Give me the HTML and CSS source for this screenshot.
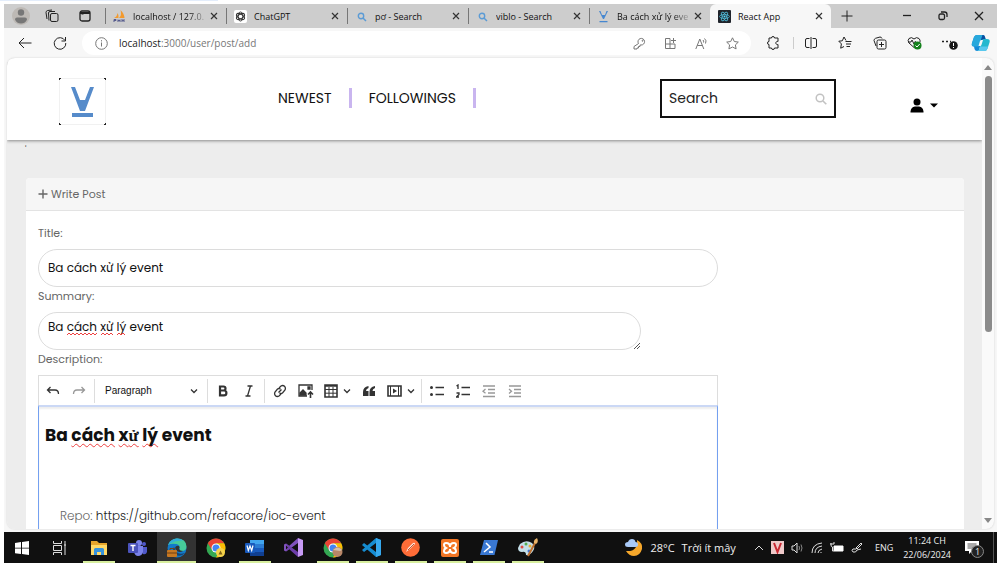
FILE: index.html
```html
<!DOCTYPE html>
<html lang="vi">
<head>
<meta charset="utf-8">
<meta name="viewport" content="width=device-width, initial-scale=1">
<title>React App</title>
<link rel="stylesheet" href="styles.css">
</head>
<body>
<div class="desktop">
  <div class="top-strip"></div>
  <div class="browser">
    <div class="tabbar">
      <div class="tab-tools">
        <button class="icon-btn" aria-label="Profile"><svg width="20" height="20" viewBox="0 0 20 20"><circle cx="10" cy="10" r="9" fill="#bdb9b5"/><circle cx="10" cy="6.500" r="3.200" fill="#777"/><path d="M4 13.500q0-2 2-2h8q2 0 2 2q-1.500 4-6 4t-6-4z" fill="#777"/></svg></button>
        <button class="icon-btn" aria-label="Workspaces"><svg width="14" height="14" viewBox="0 0 14 14" class="line"><rect x="5.500" y="4.500" width="7.500" height="8" rx="1.500"/><path d="M4 11.500L3.500 4q0-1.500 1.500-1.500h5M2 10L1 3.500Q1 2 2.500 1.500L7 1"/></svg></button>
        <button class="icon-btn" aria-label="Tab actions"><svg width="12" height="12" viewBox="0 0 12 12" class="line bold"><rect x="1" y="1" width="10" height="10" rx="2"/><path d="M1 3h10M3.500 3v1.500" stroke-width="2"/></svg></button>
      </div>
      <div class="tabs">
        <div class="tab"><svg class="fav" viewBox="0 0 13 13"><path d="M1 8Q4 7 4.500 3Q6 5 5.500 8zM6 8Q9 5 7.500 0Q11 3 11.500 8z" fill="#f39a2d"/><path d="M1 12V9.500h2v1H1M5 12V9.500M5 10.500h2M7 9.500V12M9 12V9.500l1 1.500 1-1.500V12" fill="none" stroke="#555a8c"/></svg><span class="tab-title fade">localhost / 127.0.</span><button class="close" aria-label="Close tab"><svg width="8" height="8" viewBox="0 0 8 8"><path d="M1 1l6 6M7 1L1 7"/></svg></button></div>
        <div class="tab"><svg class="fav" viewBox="0 0 13 13"><rect width="13" height="13" rx="2" fill="#fff"/><g fill="none" stroke="#333"><ellipse cx="6.500" cy="6.500" rx="2.200" ry="4.500"/><ellipse cx="6.500" cy="6.500" rx="2.200" ry="4.500" transform="rotate(60 6.500 6.500)"/><ellipse cx="6.500" cy="6.500" rx="2.200" ry="4.500" transform="rotate(120 6.500 6.500)"/></g></svg><span class="tab-title">ChatGPT</span><button class="close" aria-label="Close tab"><svg width="8" height="8" viewBox="0 0 8 8"><path d="M1 1l6 6M7 1L1 7"/></svg></button></div>
        <div class="tab"><svg class="fav" viewBox="0 0 13 13"><circle cx="6" cy="6" r="2.700" fill="none" stroke="#5b9bd5" stroke-width="1.400"/><path d="M8 8l3 3" stroke="#5b9bd5" stroke-width="1.500"/></svg><span class="tab-title">pơ - Search</span><button class="close" aria-label="Close tab"><svg width="8" height="8" viewBox="0 0 8 8"><path d="M1 1l6 6M7 1L1 7"/></svg></button></div>
        <div class="tab"><svg class="fav" viewBox="0 0 13 13"><circle cx="6" cy="6" r="2.700" fill="none" stroke="#5b9bd5" stroke-width="1.400"/><path d="M8 8l3 3" stroke="#5b9bd5" stroke-width="1.500"/></svg><span class="tab-title">viblo - Search</span><button class="close" aria-label="Close tab"><svg width="8" height="8" viewBox="0 0 8 8"><path d="M1 1l6 6M7 1L1 7"/></svg></button></div>
        <div class="tab"><svg class="fav" viewBox="0 0 13 13"><path d="M2 1h1.500L5 5h3l1.500-4H11L7 9H6zM2.500 11h8v1.300h-8z" fill="#4687d0"/></svg><span class="tab-title fade">Ba cách xử lý eve</span><button class="close" aria-label="Close tab"><svg width="8" height="8" viewBox="0 0 8 8"><path d="M1 1l6 6M7 1L1 7"/></svg></button></div>
        <div class="tab active"><svg class="fav" viewBox="0 0 13 13"><rect width="13" height="13" rx="1" fill="#20242b"/><g fill="none" stroke="#4fb9d8" stroke-width=".8"><ellipse cx="6.500" cy="6.500" rx="5" ry="2"/><ellipse cx="6.500" cy="6.500" rx="5" ry="2" transform="rotate(60 6.500 6.500)"/><ellipse cx="6.500" cy="6.500" rx="5" ry="2" transform="rotate(120 6.500 6.500)"/></g><circle cx="6.500" cy="6.500" r="1" fill="#61dafb"/></svg><span class="tab-title">React App</span><button class="close" aria-label="Close tab"><svg width="8" height="8" viewBox="0 0 8 8"><path d="M1 1l6 6M7 1L1 7"/></svg></button></div>
        <button class="icon-btn new-tab" aria-label="New tab"><svg width="12" height="12" viewBox="0 0 12 12" class="line"><path d="M6 .5v11M.5 6h11"/></svg></button>
      </div>
      <div class="win-controls">
        <button class="icon-btn" aria-label="Minimize"><svg width="10" height="10" viewBox="0 0 10 10" class="line bold"><path d="M1 4.500h8"/></svg></button>
        <button class="icon-btn" aria-label="Restore"><svg width="10" height="10" viewBox="0 0 10 10" class="line bold"><rect x="1" y="3" width="5.500" height="5.500" rx="1.500"/><path d="M3 1h3.500Q9 1 9 3.500V6"/></svg></button>
        <button class="icon-btn" aria-label="Close window"><svg width="10" height="10" viewBox="0 0 10 10" class="line bold"><path d="M1 1l8 8M9 1L1 9"/></svg></button>
      </div>
    </div>

    <div class="toolbar">
      <button class="icon-btn nav-btn" aria-label="Back"><svg width="14" height="12" viewBox="0 0 14 12" class="line"><path d="M13.500 6H1M6 1L1 6l5 5"/></svg></button>
      <button class="icon-btn nav-btn" aria-label="Refresh"><svg width="14" height="14" viewBox="0 0 14 14" class="line"><path d="M12 4.500A5.800 5.800 0 1 0 12.800 7M12.500 1v4h-4"/></svg></button>
      <div class="address">
        <svg width="13" height="13" viewBox="0 0 13 13" class="line gray"><circle cx="6.500" cy="6.500" r="5.800"/><path d="M6.500 5.500v4M6.500 3.200v1.200"/></svg>
        <a class="url" href="#">localhost<span>:3000/user/post/add</span></a>
        <div class="address-actions">
          <button class="icon-btn" aria-label="Passwords"><svg width="13" height="13" viewBox="0 0 13 13" class="line gray"><path d="M5.500 6.500A3.300 3.300 0 1 1 8 8H7v1.500H5.500V11H4v1H1v-2.500z"/><circle cx="9.500" cy="3.800" r=".5"/></svg></button>
          <button class="icon-btn" aria-label="Install app"><svg width="13" height="13" viewBox="0 0 13 13" class="line gray"><path d="M6 1.500H1.500v10h9.500V7H1.500M6 1.500v10M9.500 1v5M7 3.500h5"/></svg></button>
          <button class="icon-btn" aria-label="Read aloud"><svg width="13" height="13" viewBox="0 0 13 13" class="line gray"><path d="M.8 12L4.800 2l4 10M2.300 8.500h5M8 3q1 1 .5 2.500M9.500 1.500q2.500 2 1 5"/></svg></button>
          <button class="icon-btn" aria-label="Add to favorites"><svg width="13" height="13" viewBox="0 0 13 13" class="line gray"><path d="M6.500.8l1.800 3.700 4 .6-2.900 2.800.7 4-3.600-1.900-3.600 1.900.7-4L.7 5.100l4-.6z"/></svg></button>
        </div>
      </div>
      <div class="browser-actions">
        <button class="icon-btn" aria-label="Extensions"><svg width="14" height="14" viewBox="0 0 14 14" class="line"><path d="M4 2h1.500a1.500 1.500 0 0 1 3 0H12v3.500a1.600 1.600 0 1 0 0 3V12H8.500a1.500 1.500 0 0 1-3 0H3V8.500a1.500 1.500 0 0 1 0-3V2z"/></svg></button>
        <span class="vbar"></span>
        <button class="icon-btn" aria-label="Split screen"><svg width="14" height="14" viewBox="0 0 14 14" class="line"><path d="M5.500 2.500H3Q1.500 2.500 1.500 4v6q0 1.500 1.500 1.500h2.500M8.500 2.500H11q1.500 0 1.500 1.500v6q0 1.500-1.500 1.500H8.500M7 1v12"/></svg></button>
        <button class="icon-btn" aria-label="Favorites"><svg width="14" height="14" viewBox="0 0 14 14" class="line"><path d="M8 4.500L6 1 4.300 4.800.8 5.200l2.600 2.700-.7 4.300L6 10.500M7.500 5.500h6M8 8h5M8.500 10.500H12"/></svg></button>
        <button class="icon-btn" aria-label="Collections"><svg width="14" height="14" viewBox="0 0 14 14" class="line"><rect x="4" y="4" width="9" height="9" rx="1.500"/><path d="M8.500 6v5M6 8.500h5M3 10L1 4.500Q1 3 2.500 2.300L7 1q1.500 0 2 1.500"/></svg></button>
        <button class="icon-btn" aria-label="Browser essentials"><svg width="15" height="14" viewBox="0 0 15 14" class="line"><path d="M7 11.500L2 7Q.2 4.500 2 2.500q2.500-2 5 .5 2.500-2.500 5-.5 1.500 1.500 1 3.500M1 6h3l1-2 2 4 1.500-3"/><circle cx="10.500" cy="9.500" r="4" fill="#14821c" stroke="none"/><path d="M8.500 9.500l1.500 1.500 2.700-3" stroke="#fff"/></svg></button>
        <button class="icon-btn" aria-label="Settings and more"><svg width="17" height="14" viewBox="0 0 17 14"><path d="M1 5.500h2M5 5.500h2M9 5.500h1" stroke="#222" stroke-width="1.500"/><circle cx="12.500" cy="9.500" r="4.300" fill="#181818"/><path d="M12.500 7v3M12.500 11v1" stroke="#fff"/></svg></button>
        <button class="icon-btn" aria-label="Copilot"><svg width="19" height="18" viewBox="0 0 19 18"><path d="M6 1h6q1.500 0 2 2l.8 3H11L8 16q-.5 1-2 1-2 0-2.500-2l-.5-2.500Q0 12.500 1 9l2-6q1-2 3-2z" fill="#1689d8"/><path d="M6 1h5.500L8 12.500H3Q0 12.500 1 9l2-6q1-2 3-2z" fill="#28a8dc"/><path d="M6 1h6q1.500 0 2 2l.8 3H10L11.500 1z" fill="#0b4f9e"/><path d="M15 5h1q3.500 0 2.500 3.500l-2 6q-1 2.500-3 2.500H6q2 0 2.500-2L11 6q.5-1 2-1z" fill="#24b8cf"/><path d="M8 16l1-3.500h8.200l-.7 2q-1 2.500-3 2.500H6q1.500 0 2-1z" fill="#59c8ee"/><path d="M9 7L7.500 12H9q1.200 0 1.600-1.500L12 6h-1.500Q9.500 6 9 7z" fill="#f7f7f7"/></svg></button>
      </div>
    </div>

    <div class="viewport">
      <div class="page">
        <header class="site-header">
          <a class="logo" href="#" aria-label="Home"><svg width="47" height="47" viewBox="0 0 47 47"><rect x=".5" y=".5" width="46" height="46" fill="#fff" stroke="#f1f1f1"/><path d="M0 0h2v1H1v1H0zM45 0h2v2h-1V1h-1zM0 45h1v1h1v1H0zM46 45h1v2h-2v-1h1z" fill="#222"/><path d="M12 9h4l5 13h5l5-13h4L26 33h-5zM13 35h21v4H13z" fill="#568bca"/></svg></a>
          <nav class="site-nav">
            <a href="#">NEWEST</a>
            <a href="#">FOLLOWINGS</a>
          </nav>
          <div class="header-right">
            <div class="search">
              <input type="text" placeholder="Search" aria-label="Search">
              <svg width="12" height="12" viewBox="0 0 12 12"><circle cx="5" cy="5" r="3.800" fill="none" stroke="#c2c2c2" stroke-width="1.500"/><path d="M8 8l3.300 3.300" stroke="#c2c2c2" stroke-width="1.600"/></svg>
            </div>
            <button class="user" aria-label="Account"><svg width="28" height="15" viewBox="0 0 28 15"><circle cx="7" cy="4" r="3.500"/><path d="M.5 14.500v-1Q1 9 5 8.500h4q4 .5 4.500 5v1zM20 5.500h8l-4 4z"/></svg></button>
          </div>
        </header>
        <p class="stray">'</p>
        <main class="card">
          <h1 class="card-head"><svg width="10" height="10" viewBox="0 0 10 10"><path d="M5 .5v9M.5 5h9" stroke="#666" stroke-width="1.400"/></svg>Write Post</h1>
          <form class="card-body">
            <label for="title">Title:</label>
            <input class="field" id="title" type="text" value="Ba cách xử lý event">
            <label for="summary">Summary:</label>
            <div class="summary-wrap">
              <textarea class="field" id="summary" rows="1" spellcheck="false">Ba cách xử lý event</textarea>
              <svg class="spell" width="84" height="4" viewBox="0 0 84 4"><path d="M0 3l2-2 2 2 2-2 2 2 2-2 2 2 2-2 2 2 2-2 2 2 2-2 2 2 2-2 2 2 2-2M34 3l2-2 2 2 2-2 2 2 2-2 2 2M50 3l2-2 2 2 2-2 2 2"/></svg>
              <svg class="grip" width="6" height="6" viewBox="0 0 6 6"><path d="M0 6l6-6M3 6l3-3"/></svg>
            </div>
            <label for="editor">Description:</label>
            <div class="editor">
              <div class="editor-bar">
                <button type="button" aria-label="Undo"><svg width="14" height="14" viewBox="0 0 14 14"><path d="M4.500 3L1.500 6l3 3M1.500 6H9q3.500 0 3.500 4"/></svg></button>
                <button type="button" class="off" aria-label="Redo"><svg width="14" height="14" viewBox="0 0 14 14"><path d="M9.500 3l3 3-3 3M12.500 6H5Q1.500 6 1.500 10"/></svg></button>
                <span class="sep"></span>
                <button type="button" class="heading-pick"><span>Paragraph</span><svg width="8" height="8" viewBox="0 0 8 8"><path d="M1 2.500l3 3 3-3"/></svg></button>
                <span class="sep"></span>
                <button type="button" aria-label="Bold"><svg width="14" height="14" viewBox="0 0 14 14"><path d="M4 2.500h3.500a2 2 0 0 1 0 4H4zM4 6.500h4a2.300 2.300 0 0 1 0 4.800H4z" stroke-width="2.200"/></svg></button>
                <button type="button" aria-label="Italic"><svg width="14" height="14" viewBox="0 0 14 14"><path d="M5.500 2h5M3.500 12h5M8.500 2l-3 10"/></svg></button>
                <span class="sep"></span>
                <button type="button" aria-label="Link"><svg width="14" height="14" viewBox="0 0 14 14"><path d="M6 4l2-2q2-1.200 3.500.3T12 6l-2.500 3Q8 10 6.500 9M8 10l-2 2q-2 1.200-3.500-.3T2 8l2.500-3Q6 4 7.500 5M5.500 8.500l3-3"/></svg></button>
                <button type="button" aria-label="Insert image"><svg width="16" height="14" viewBox="0 0 16 14"><path d="M9 12H1V1h13v5"/><path d="M2 11V9l3-3 3 3v2zM10 3h2v2h-2z" fill="#333"/><path d="M12.500 14V8M10 10.500L12.500 8l2.500 2.500" stroke-width="1.600"/></svg></button>
                <button type="button" class="split" aria-label="Insert table"><svg width="14" height="14" viewBox="0 0 14 14"><path d="M1 1h12v12H1zM1 2h12" stroke-width="1.600"/><path d="M1 5.500h12M1 9.200h12M5 3v10M9 3v10" stroke-width="1"/></svg><svg width="8" height="8" viewBox="0 0 8 8"><path d="M1 2.500l3 3 3-3"/></svg></button>
                <button type="button" aria-label="Block quote"><svg width="14" height="14" viewBox="0 0 14 14"><path d="M6.500 2Q1 3 1 8v4h5.500V7H4q0-2 2.500-3zM13 2Q7.500 3 7.500 8v4H13V7h-2.500q0-2 2.500-3z" class="solid"/></svg></button>
                <button type="button" class="split" aria-label="Insert media"><svg width="15" height="14" viewBox="0 0 15 14"><path d="M1 2h13v10H1z" stroke-width="1.600"/><path d="M3.500 2v10M11.500 2v10" stroke-width="1"/><path d="M6 4.500L10 7 6 9.500z" class="solid"/></svg><svg width="8" height="8" viewBox="0 0 8 8"><path d="M1 2.500l3 3 3-3"/></svg></button>
                <span class="sep"></span>
                <button type="button" aria-label="Bulleted list"><svg width="14" height="14" viewBox="0 0 14 14"><path d="M5.500 3.500H14M5.500 10.500H14"/><circle cx="1.500" cy="3.500" r="1.500" class="solid"/><circle cx="1.500" cy="10.500" r="1.500" class="solid"/></svg></button>
                <button type="button" aria-label="Numbered list"><svg width="14" height="14" viewBox="0 0 14 14"><path d="M5.500 3.500H14M5.500 10.500H14M.5 2L2 1v4M.5 9H3v1.500L.5 13H3"/></svg></button>
                <button type="button" class="off" aria-label="Decrease indent"><svg width="14" height="14" viewBox="0 0 14 14"><path d="M1 2h12M6 5.500h7M6 9h7M1 12.500h12M3.500 5L1 7.200l2.500 2"/></svg></button>
                <button type="button" class="off" aria-label="Increase indent"><svg width="14" height="14" viewBox="0 0 14 14"><path d="M1 2h12M6 5.500h7M6 9h7M1 12.500h12M1 5l2.500 2.200L1 9.500"/></svg></button>
              </div>
              <div class="editor-area" id="editor" role="textbox" aria-label="Description">
                <h2>Ba <u>cách</u> <u>x<span class="fallback">ử</span></u> <u>lý</u> event</h2>
                <p>Repo: <a href="#">https://github.com/refacore/ioc-event</a></p>
              </div>
            </div>
          </form>
        </main>
      </div>
      <div class="scrollbar"><span class="arrow up"></span><span class="thumb"></span><span class="arrow down"></span></div>
    </div>
  </div>

  <footer class="taskbar">
    <div class="apps">
      <button aria-label="Start" class="start"><svg width="14" height="14" viewBox="0 0 14 14"><path d="M0 2l6-1v5.700H0zM7 .9L14 0v6.700H7zM0 7.500h6V13l-6-.8zM7 7.500h7V14l-7-1z" fill="#fff"/></svg></button>
      <button aria-label="Task view"><svg width="14" height="14" viewBox="0 0 14 14"><path d="M.5 0v2.500h8V0M.5 4.500h8v5h-8zM.5 14v-2.500h8V14M12 0v14M11 4h2" fill="none" stroke="#ddd"/></svg></button>
      <button aria-label="File Explorer" class="open"><svg width="18" height="16" viewBox="0 0 18 16"><path d="M1 1h6l2 2h8v12H1z" fill="#e6a52c"/><path d="M1 5h16v10H1z" fill="#ffd866"/><path d="M4 15V9.500Q4 8 5.500 8h7Q14 8 14 9.500V15h-3v-3H7v3z" fill="#3692dc"/></svg></button>
      <button aria-label="Teams"><svg width="19" height="18" viewBox="0 0 19 18"><circle cx="11" cy="4" r="3" fill="#7b83eb"/><circle cx="16" cy="5" r="2" fill="#5059c9"/><path d="M12 8h7v5q-1 3-4 2z" fill="#5059c9"/><path d="M6 7h9v6q-1 4-5 4-3 0-4-4z" fill="#7b83eb"/><rect y="4" width="10" height="10" rx="1" fill="#4b53bc"/><path d="M2.500 6.500h5M5 6.500V12" stroke="#fff" stroke-width="1.400"/></svg></button>
      <button aria-label="Edge" class="open current"><svg width="20" height="20" viewBox="0 0 20 20"><circle cx="10" cy="10" r="9.500" fill="#1279c9"/><path d="M1 7Q4 .5 10 .5q9 0 9.500 8 0 5-6 4.500-2-.5-1-2 1-4-3-5Q4 5 1 7z" fill="#46cb9a"/><path d="M1 7Q4 .5 10 .5q4 0 6 2Q9 2 4 5z" fill="#31aed8"/><path d="M7 9q-3 5 2 8 5 2 9-2-7 2-9-2z" fill="#17436f"/><path d="M8 10q1-3 4-2 1 1 0 3 1 2 4 2-3 2-6 0z" fill="#333"/><rect y="12" width="10" height="7" rx="1" fill="#c87922"/><path d="M3 12v-1.500h4V12M0 15h10" fill="none" stroke="#734012"/></svg></button>
      <button aria-label="Chrome"><svg width="20" height="20" viewBox="0 0 20 20"><circle cx="10" cy="10" r="9.500" fill="#34a853"/><path d="M1.800 5.300A9.500 9.500 0 0 1 18.200 5.300H10L6 12z" fill="#ea4335"/><path d="M18.200 5.300A9.500 9.500 0 0 1 10 19.500l4-7-4-7.200z" fill="#fbbc04"/><circle cx="10" cy="10" r="4.500" fill="#fff"/><circle cx="10" cy="10" r="3.500" fill="#4285f4"/><circle cx="14.500" cy="14.500" r="4.500" fill="#f5d24b"/><path d="M12.500 16.500l2-4 2 4z" fill="#806316"/></svg></button>
      <button aria-label="Word" class="open"><svg width="19" height="18" viewBox="0 0 19 18"><path d="M5 1h14v5H5z" fill="#41a5ee"/><path d="M5 5h14v4H5z" fill="#2b7cd3"/><path d="M5 9h14v4H5z" fill="#185abd"/><path d="M5 13h14v4H5z" fill="#103f91"/><rect y="4" width="10" height="10" rx="1" fill="#185abd"/><path d="M2 6.500l1.300 5L5 7l1.700 4.500 1.300-5" fill="none" stroke="#fff" stroke-width="1.200"/></svg></button>
      <button aria-label="Visual Studio"><svg width="19" height="19" viewBox="0 0 19 19"><path d="M14 0L5 8 2 5.500 0 6.500v6L2 13.500 14 5z" fill="#8052bd"/><path d="M2 5.500l12 8.500v5L5 11l-3 2.500L4 9.500z" fill="#6d3eaa"/><path d="M2 7.500L4 9.500 2 11.500z" fill="#101010"/><path d="M14 0l5 2v15l-5 2z" fill="#c79af5"/></svg></button>
      <button aria-label="Chrome profile" class="open"><svg width="20" height="20" viewBox="0 0 20 20"><circle cx="10" cy="10" r="9.500" fill="#34a853"/><path d="M1.800 5.300A9.500 9.500 0 0 1 18.200 5.300H10L6 12z" fill="#ea4335"/><path d="M18.200 5.300A9.500 9.500 0 0 1 10 19.500l4-7-4-7.200z" fill="#fbbc04"/><circle cx="10" cy="10" r="4.500" fill="#fff"/><circle cx="10" cy="10" r="3.500" fill="#4285f4"/><circle cx="14.500" cy="14" r="5" fill="#b88768"/><path d="M10 12q5-5 9 0l-2 1z" fill="#d4c0ab"/></svg></button>
      <button aria-label="Visual Studio Code" class="open"><svg width="19" height="19" viewBox="0 0 19 19"><path d="M14 0l5 2v15l-5 2L0 7l2-2 12 9V5L2 14l-2-2z" fill="#168cd0"/><path d="M14 0l5 2v15l-5 2z" fill="#36a9ee"/></svg></button>
      <button aria-label="Postman" class="open"><svg width="19" height="19" viewBox="0 0 19 19"><circle cx="9.500" cy="9.500" r="9.300" fill="#ff6c37"/><path d="M5 14l2-4 5-5q2-1 2 1l-5 5z" fill="#ffe7df"/><path d="M7 12l6-6" stroke="#bd5736"/></svg></button>
      <button aria-label="XAMPP" class="open"><svg width="18" height="18" viewBox="0 0 18 18"><rect width="18" height="18" rx="2" fill="#f27524"/><path d="M5 4q4 0 4 4 0-4 4-4 2 0 2 2t-2 3q2 1 2 3t-2 2q-4 0-4-4 0 4-4 4-2 0-2-2t2-3Q3 8 3 6t2-2z" fill="none" stroke="#fff" stroke-width="2"/></svg></button>
      <button aria-label="PowerShell" class="open"><svg width="18" height="15" viewBox="0 0 18 15"><path d="M4 0h14l-3.500 15H0z" fill="#3978d3"/><path d="M6 3l4 4-6 5M9 12h4" fill="none" stroke="#fff" stroke-width="1.600"/></svg></button>
      <button aria-label="Paint" class="open"><svg width="20" height="19" viewBox="0 0 20 19"><path d="M2 6q6-5 12-1 4 4 1 8-3 5-7 4 0-4-4-3-4 0-4-4z" fill="#c4dfe9"/><circle cx="4" cy="9" r="1.500" fill="#df4c43"/><circle cx="8" cy="6" r="1.500" fill="#56ad52"/><circle cx="12" cy="8" r="1.500" fill="#e8af35"/><circle cx="11" cy="13" r="1.500" fill="#4673cf"/><path d="M10 18l7-13" stroke="#bc7031" stroke-width="2"/><path d="M16 5q-1-3 3-5 2 4-1 6z" fill="#e9b46a"/></svg></button>
    </div>
    <div class="tray">
      <button class="weather"><svg width="18" height="18" viewBox="0 0 18 18"><path d="M12 1q6 3 5 9-2 7-8 7-5 0-8-5 12 1 11-11z" fill="#f6a72b"/><path d="M3 8Q0 8 0 5.500T3 3q1-3 4-3t3.500 3Q13 3 13 5.500T10.500 8z" fill="#a9c9f7"/></svg><span>28°C</span><span>Trời ít mây</span></button>
      <div class="status">
        <svg width="10" height="10" viewBox="0 0 10 10" class="line white"><path d="M1 7l4-4 4 4"/></svg>
        <svg width="13" height="13" viewBox="0 0 13 13"><rect width="13" height="13" fill="#efcaca"/><path d="M3 2l3.500 9L10 2" fill="none" stroke="#c92832" stroke-width="2"/></svg>
        <svg width="13" height="12" viewBox="0 0 13 12" class="line white"><path d="M1 4h2l3-3v10L3 8H1z"/><path d="M8 4q1 2 0 4M10 2.500q2 3.500 0 7" stroke="#888"/></svg>
        <svg width="12" height="12" viewBox="0 0 12 12" class="line white"><path d="M1 11Q1 2 11 1M4 11q0-6 7-7M7 11q0-3 4-4M10 10v1"/></svg>
        <svg width="14" height="11" viewBox="0 0 14 11"><path d="M4 4h9v5H4z" fill="#fff" stroke="#fff"/><path d="M1 1v2q0 2 1.500 2V9H4M0 2h4V0" fill="none" stroke="#ddd"/></svg>
        <svg width="12" height="12" viewBox="0 0 12 12" class="line white"><path d="M5 6l5-5 1 1-5 5zM5 7H2q-2 1 0 3 3 1 4-2l4-1"/></svg>
      </div>
      <span class="lang">ENG</span>
      <div class="clock"><span>11:24 CH</span><span>22/06/2024</span></div>
      <button class="notices" aria-label="Notifications"><svg width="14" height="13" viewBox="0 0 14 13"><path d="M0 0h14v10H7l-3 3v-3H0z" fill="#fff"/><path d="M2.500 3h9M2.500 5h9M2.500 7h6" stroke="#555"/></svg><span class="count">1</span></button>
      <span class="peek"></span>
    </div>
  </footer>
</div>
</body>
</html>
```
FILE: styles.css
```css
* { box-sizing: border-box; }

body {
  margin: 0;
  background: #fff;
  color: #111;
  font-family: Poppins, Inter, sans-serif;
}

button {
  margin: 0;
  padding: 0;
  border: 0;
  background: none;
  color: inherit;
  font: inherit;
}

a { color: inherit; text-decoration: none; }
svg { display: block; flex: none; }

.desktop {
  display: flex;
  flex-direction: column;
  height: 100vh;
  padding: 0 0 2px 4px;
  overflow: hidden;
}

.top-strip {
  flex: none;
  width: 22%;
  height: 1px;
  margin: 0 0 3px -4px;
  background: #e3edfb;
}

.browser {
  display: flex;
  flex: 1;
  flex-direction: column;
  min-height: 0;
  padding-bottom: 3px;
  background: #f7f7f7;
  font-family: "Segoe UI", "Open Sans", sans-serif;
}

.icon-btn { display: grid; place-items: center; }
.line { fill: none; stroke: #222; stroke-width: 1; }
.line.bold { stroke-width: 1.3; }
.line.gray { stroke: #777; }
.line.white { stroke: #ddd; }

/* Tab strip */
.tabbar {
  display: flex;
  flex: none;
  height: 24px;
  background: #cdcdcd;
}

.tab-tools {
  display: grid;
  flex: none;
  grid-template-columns: 34px 28px 37px;
  padding-right: 2px;
}

.tabs { display: flex; flex: 1; min-width: 0; }

.tab {
  display: flex;
  flex: 0 1 121px;
  align-items: center;
  gap: 7px;
  min-width: 0;
  padding: 0 8px;
  background: linear-gradient(#777, #777) left center / 1px 16px no-repeat;
  font-size: 9px;
}

.tab.active {
  border-radius: 6px 6px 0 0;
  background: #f7f7f7;
}

.fav { width: 13px; height: 13px; }

.tab-title {
  flex: 1;
  min-width: 0;
  margin-right: -5px;
  overflow: hidden;
  white-space: nowrap;
}

.fade { mask-image: linear-gradient(90deg, #000 75%, transparent); }
.close svg { fill: none; stroke: #333; stroke-width: 1.2; }
.new-tab { width: 32px; }

.win-controls {
  display: grid;
  flex: none;
  grid-template-columns: repeat(3, 36px);
}

/* Address row */
.toolbar {
  display: flex;
  flex: none;
  align-items: center;
  height: 30px;
  padding: 0 4px 0 6px;
}

.nav-btn { width: 40px; }
.nav-btn:first-child { width: 30px; }

.address {
  display: flex;
  flex: 1;
  align-items: center;
  gap: 11px;
  height: 24px;
  margin-left: 2px;
  padding: 0 3px 0 13px;
  border-radius: 12px;
  background: #fff;
}

.url { flex: 1; color: #222; font-size: 10px; }
.url span { color: #777; }
.address-actions { display: grid; grid-template-columns: repeat(4, 31px); }

.browser-actions {
  display: grid;
  grid-template-columns: 40px 1px 34px 34px 35px 34px 36px 26px;
  align-items: center;
  margin-left: 2px;
}

.vbar { height: 12px; background: #ccc; }

/* Page viewport */
.viewport {
  display: flex;
  flex: 1;
  min-height: 0;
  margin: 0 3px;
  overflow: hidden;
  border-radius: 8px;
  background: #fafafa;
  box-shadow: 0 0 2px #ccc;
}

.page {
  flex: 1;
  min-width: 0;
  overflow: hidden;
  background: #ededed;
  font-family: Poppins, Inter, sans-serif;
}

.site-header {
  display: grid;
  grid-template-columns: 271fr 382fr 322fr;
  height: 82px;
  background: #fff;
  box-shadow: 0 1px 3px #888;
}

.logo { padding: 20px 0 0 52px; }

.site-nav {
  display: flex;
  align-items: flex-start;
  gap: 17px;
  padding-top: 30px;
  font-size: 14px;
  line-height: 20px;
}

.site-nav a { padding-right: 17px; border-right: 3px solid #c9b5ef; }

.header-right {
  display: flex;
  align-items: flex-start;
  justify-content: space-between;
  padding: 21px 44px 0 0;
}

.search {
  display: flex;
  align-items: center;
  width: 176px;
  height: 39px;
  padding: 0 7px;
  border: 2px solid #111;
}

.search input {
  flex: 1;
  min-width: 0;
  padding: 0;
  border: 0;
  outline: 0;
  font: 14px Poppins, Inter, sans-serif;
}

.search input::placeholder { color: #222; opacity: 1; }
.user { padding-top: 19px; }

.stray {
  height: 38px;
  margin: 0 0 0 18px;
  color: #444;
  font-size: 9px;
  line-height: 18px;
}

.card {
  margin: 0 18px 0 19px;
  border-radius: 4px 4px 0 0;
  background: #fff;
}

.card-head {
  display: flex;
  align-items: center;
  gap: 3px;
  height: 33px;
  margin: 0;
  padding: 0 12px;
  border-bottom: 1px solid #e3e3e3;
  border-radius: 4px 4px 0 0;
  background: #f6f6f6;
  color: #666;
  font-size: 11px;
  font-weight: 400;
}

.card-body { padding: 13px 12px; }

.card-body label {
  display: block;
  margin-bottom: 6px;
  color: #666;
  font-size: 11px;
  line-height: 19px;
}

.field {
  display: block;
  width: 100%;
  height: 38px;
  border: 1px solid #dcdcdc;
  border-radius: 19px;
  outline: 0;
  background: #fff;
  color: #111;
  font: 12px/18px Poppins, Inter, sans-serif;
}

input.field { width: 74.4%; padding: 0 9px; }
.summary-wrap { position: relative; width: 66%; }
textarea.field { padding: 5px 9px; overflow: hidden; resize: none; }

.spell {
  position: absolute;
  top: 20px;
  left: 29px;
  fill: none;
  stroke: #ed4040;
  stroke-width: 1;
}

.grip {
  position: absolute;
  right: 1px;
  bottom: 1px;
  stroke: #555;
}

/* Rich text editor */
.editor { width: 74.4%; }

.editor-bar {
  display: flex;
  align-items: center;
  height: 30px;
  padding-left: 1px;
  border: 1px solid #ddd;
  border-bottom: 0;
}

.editor-bar button { display: grid; flex: 0 0 26px; place-items: center; }

.editor-bar svg {
  fill: none;
  stroke: #333;
  stroke-width: 1.3;
}

.editor-bar .solid { fill: #333; stroke: none; }
.editor-bar .off { opacity: .5; }
.sep { width: 1px; height: 24px; margin: 0 2px; background: #ddd; }

.editor-bar .heading-pick {
  display: flex;
  flex: 0 0 108px;
  align-items: center;
  justify-content: space-between;
  padding: 0 7px 0 8px;
  font: 10px "Liberation Sans", sans-serif;
}

.editor-bar .split {
  display: flex;
  flex: 0 0 37px;
  align-items: center;
  justify-content: center;
  gap: 5px;
}

.editor-area {
  min-height: 180px;
  padding: 15px 6px;
  border: 1px solid #74a0f0;
  border-top: 2px solid #cbd8f5;
  box-shadow: inset 0 2px 2px #eee;
}

.editor-area h2 { margin: 0; font-size: 17px; line-height: 26px; }

.editor-area u {
  text-decoration: underline wavy #ed4040 1px;
  text-decoration-skip-ink: none;
  text-underline-offset: 2px;
}

.fallback { font-family: "Liberation Serif", serif; }

.editor-area p {
  margin: 57px 0 0 15px;
  color: #666;
  font-size: 12px;
  font-weight: 300;
  line-height: 20px;
}

.editor-area a { color: #222; }

.scrollbar {
  display: flex;
  flex: 0 0 12px;
  flex-direction: column;
  align-items: center;
  padding: 7px 0 6px;
}

.thumb {
  width: 7px;
  height: 256px;
  margin: 6px 0 auto;
  border-radius: 4px;
  background: #8b8b8b;
}

.arrow { border: 4px solid transparent; }
.up { border-top: 0; border-bottom: 5px solid #888; }
.down { border-bottom: 0; border-top: 5px solid #888; }

/* Taskbar */
.taskbar {
  display: flex;
  flex: none;
  justify-content: space-between;
  height: 31px;
  background: #101010;
  color: #eee;
  font-family: "Segoe UI", "Open Sans", sans-serif;
  font-size: 9px;
}

.apps { display: flex; }

.apps button {
  display: grid;
  width: 39px;
  place-items: center;
}

.apps .start { width: 36px; }

.apps .open {
  background: linear-gradient(#d7ee9e, #d7ee9e) center bottom / 32px 2px no-repeat;
}

.apps .current { background-color: #333; background-size: 39px 2px; }

.tray { display: flex; align-items: center; }

.weather {
  display: flex;
  align-items: center;
  gap: 7px;
  margin-right: 18px;
  font-size: 11px;
}

.status { display: flex; align-items: center; gap: 7px; }
.lang { margin-left: 12px; }

.clock {
  display: flex;
  flex-direction: column;
  align-items: center;
  margin-left: 10px;
  line-height: 14px;
}

.notices { position: relative; margin-left: 14px; }

.count {
  position: absolute;
  top: 4px;
  left: 6px;
  width: 13px;
  height: 13px;
  border: 1px solid #888;
  border-radius: 50%;
  background: #222;
  font-size: 9px;
  line-height: 11px;
}

.peek {
  width: 1px;
  height: 31px;
  margin: 0 3px 0 14px;
  background: #555;
}
```
